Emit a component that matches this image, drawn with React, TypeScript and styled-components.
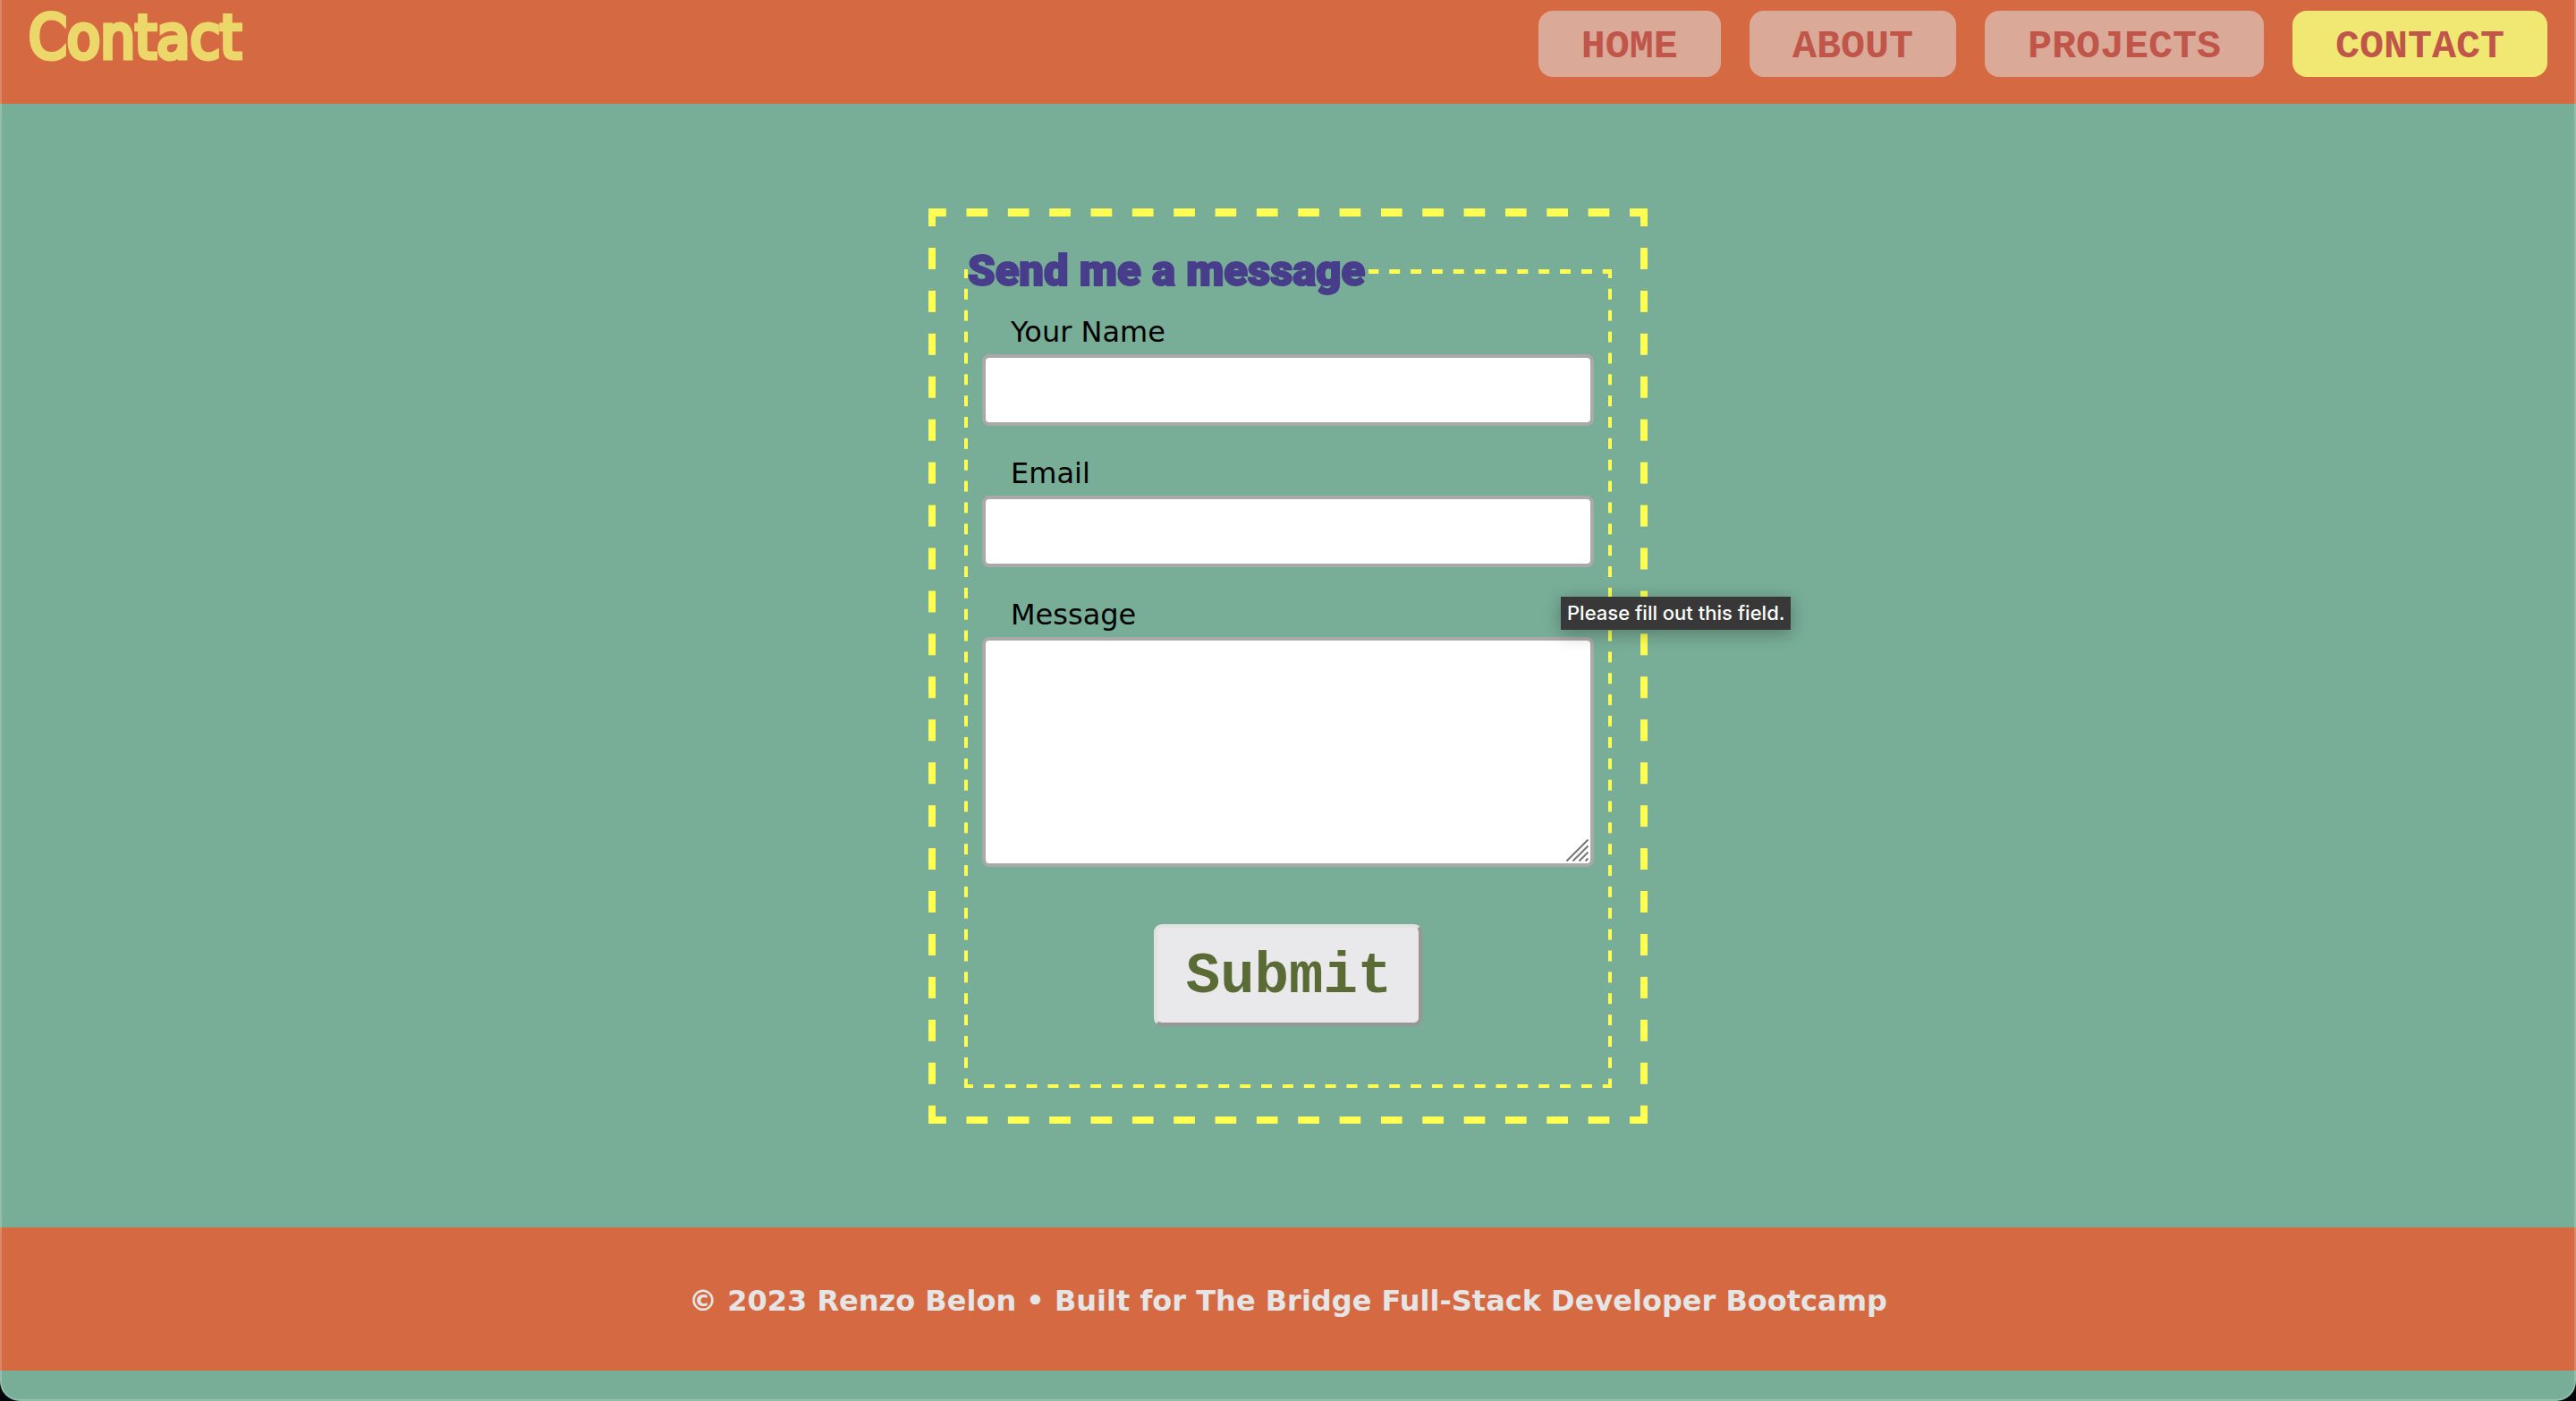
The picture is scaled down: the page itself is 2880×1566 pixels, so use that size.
import React from "react";
import styled, { createGlobalStyle, css } from "styled-components";

const color = {
  green: "#78ae97",
  orange: "#d56941",
  stitch: "#ffff54",
  title: "#ecd76b",
  legend: "#483d8b",
  line: "#a9a9a9",
};

const GlobalStyle = createGlobalStyle`
  *, *::before, *::after { box-sizing: border-box; }
  body {
    margin: 0;
    background: #04060c;
    font-family: "DejaVu Sans", Verdana, sans-serif;
    font-size: 32px;
    color: #000;
  }
`;

/* Dashed outline; periodX and periodY are the lengths of a dash and its gap. */
const stitched = (thick: number, periodX: number, periodY: number) => css`
  border: ${thick}px solid transparent;
  background-image:
    linear-gradient(90deg, ${color.stitch} 25%, transparent 25% 75%, ${color.stitch} 75%),
    linear-gradient(90deg, ${color.stitch} 25%, transparent 25% 75%, ${color.stitch} 75%),
    linear-gradient(${color.stitch} 25%, transparent 25% 75%, ${color.stitch} 75%),
    linear-gradient(${color.stitch} 25%, transparent 25% 75%, ${color.stitch} 75%);
  background-origin: padding-box;
  background-clip: border-box;
  background-size: ${periodX}px ${thick}px, ${periodX}px ${thick}px, ${thick}px ${periodY}px, ${thick}px ${periodY}px;
  background-position: 0 -${thick}px, 0 calc(100% + ${thick}px), -${thick}px 0, calc(100% + ${thick}px) 0;
  background-repeat: round no-repeat, round no-repeat, no-repeat round, no-repeat round;
`;

const Page = styled.div`
  position: relative;
  display: flex;
  flex-direction: column;
  min-height: 100vh;
  padding-bottom: 34px;
  background: ${color.green};
  border-radius: 0 0 22px 22px;
  overflow: hidden;

  &::after {
    content: "";
    position: absolute;
    inset: 0;
    border: 2px solid rgba(255, 255, 255, 0.2);
    border-top: 0;
    border-radius: inherit;
    pointer-events: none;
  }
`;

const Header = styled.header`
  display: flex;
  justify-content: space-between;
  align-items: flex-start;
  height: 116px;
  padding: 0 32px;
  background: ${color.orange};
`;

const Title = styled.h1`
  margin: 0;
  font: normal 68px/84px "DejaVu Sans Condensed", "DejaVu Sans", sans-serif;
  color: ${color.title};
  -webkit-text-stroke: 5px ${color.title};
`;

const Nav = styled.nav`
  display: flex;
  gap: 32px;
  padding-top: 12px;
`;

const NavLink = styled.a<{ $active?: boolean }>`
  padding: 8px 48px 0;
  border-radius: 16px;
  background: ${(p) => (p.$active ? "#f1e773" : "#dba997")};
  color: #c0554a;
  font: bold 45px/66px "Liberation Mono", monospace;
  text-decoration: none;
  text-transform: uppercase;
`;

const Main = styled.main`
  flex: 1;
  display: flex;
  justify-content: center;
  align-items: center;
`;

const Form = styled.form`
  ${stitched(8, 46, 48)}
  width: 100%;
  max-width: 804px;
  padding: 32px;
`;

const Fieldset = styled.fieldset`
  ${stitched(4, 24, 24)}
  min-width: 0;
  margin: 0;
  padding: 17px 16px 65px;
`;

const Legend = styled.legend`
  margin-left: -16px;
  padding: 0 4px 0 0;
  background: ${color.green};
  color: ${color.legend};
  font: 900 49px/60px Roboto, "Liberation Sans", sans-serif;
  -webkit-text-stroke: 2px ${color.legend};
`;

const Field = styled.div`
  position: relative;
  display: flex;
  flex-direction: column;
  margin-bottom: 32px;
`;

const Label = styled.label`
  margin: 0 32px 4px;
  line-height: 42px;
`;

const box = css`
  display: block;
  width: 100%;
  margin: 0;
  padding: 8px 16px;
  border: 4px solid ${color.line};
  border-radius: 8px;
  background: #fff;
  font: inherit;
`;

const Input = styled.input`
  ${box}
  height: 80px;
`;

const TextArea = styled.textarea`
  ${box}
  height: 257px;
  resize: none;
`;

const Grip = styled.svg`
  position: absolute;
  right: 6px;
  bottom: 6px;
  width: 25px;
  height: 25px;
  pointer-events: none;
`;

const Tooltip = styled.span`
  position: absolute;
  top: 1px;
  left: 647px;
  padding: 0 7px;
  background: #383838;
  box-shadow: 0 4px 20px rgba(0, 0, 0, 0.3);
  color: #fff;
  font: 500 22px/37px Inter, sans-serif;
  white-space: nowrap;
`;

const Submit = styled.button`
  display: block;
  margin: 64px auto 0;
  padding: 18px 30px 14px 32px;
  border: 4px solid;
  border-color: #e2e2e2 #979797 #979797 #e2e2e2;
  border-radius: 9px;
  background: #e9e9eb;
  color: #5a6b35;
  font: bold 64px/74px "Liberation Mono", "Courier New", monospace;
`;

const Footer = styled.footer`
  padding: 62px 32px 58px;
  background: ${color.orange};
  color: #e5e5e5;
  font-weight: bold;
  line-height: 40px;
  text-align: center;
`;

const links = ["Home", "About", "Projects", "Contact"];

export default function App() {
  return (
    <>
      <GlobalStyle />
      <Page>
        <Header>
          <Title>Contact</Title>
          <Nav>
            {links.map((name) => (
              <NavLink key={name} href="#" $active={name === "Contact"}>
                {name}
              </NavLink>
            ))}
          </Nav>
        </Header>
        <Main>
          <Form>
            <Fieldset>
              <Legend>Send me a message</Legend>
              <Field>
                <Label htmlFor="name">Your Name</Label>
                <Input id="name" type="text" required />
              </Field>
              <Field>
                <Label htmlFor="email">Email</Label>
                <Input id="email" type="email" required />
              </Field>
              <Field>
                <Label htmlFor="message">Message</Label>
                <TextArea id="message" required />
                <Grip viewBox="0 0 25 25" stroke="#777" strokeWidth="2" fill="none" aria-hidden="true">
                  <path d="M0.5 24.5L24.5 0.5M7.5 24.5L24.5 7.5M14.5 24.5L24.5 14.5M21.5 24.5L24.5 21.5" />
                </Grip>
                <Tooltip role="tooltip">Please fill out this field.</Tooltip>
              </Field>
              <Submit type="submit">Submit</Submit>
            </Fieldset>
          </Form>
        </Main>
        <Footer>© 2023 Renzo Belon • Built for The Bridge Full-Stack Developer Bootcamp</Footer>
      </Page>
    </>
  );
}
